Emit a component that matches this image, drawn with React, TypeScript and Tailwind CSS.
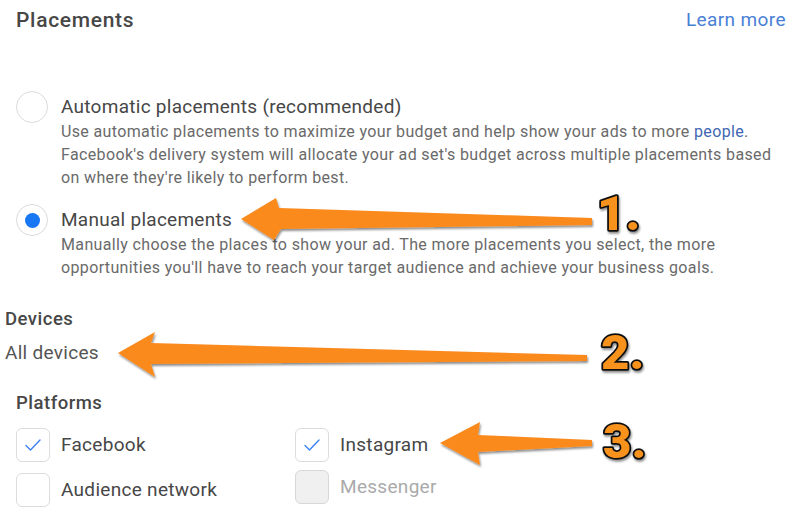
import React from "react";

const font = { fontFamily: "Roboto, 'Noto Sans', Arial, sans-serif" };

interface RadioProps {
  checked: boolean
  label: string
  children: React.ReactNode
}
const RadioOption: React.FC<RadioProps> = ({ checked, label, children }) => {
  return (
    <div className="flex items-start">
      <div className="w-8 h-8 shrink-0 rounded-full border border-[#dcdcdc] bg-white flex items-center justify-center">
        {checked && <div className="w-[15px] h-[15px] rounded-full bg-[#1877f2]" />}
      </div>
      <div className="ml-[13px] mt-[3px]">
        <div className="text-[19px] leading-[26px] tracking-[0.27px] text-[#474747]">{label}</div>
        <div className="text-[16px] leading-[23px] tracking-[0.36px] text-[#6a6a6a]">{children}</div>
      </div>
    </div>
  )
}

interface CheckProps {
  checked?: boolean
  disabled?: boolean
  label: string
}
const CheckOption: React.FC<CheckProps> = ({ checked, disabled, label }) => {
  return (
    <div className="flex items-center">
      <div
        className={
          disabled
            ? "w-[34px] h-[34px] rounded-md border border-[#d8d8d8] bg-[#f0f0f0] flex items-center justify-center"
            : "w-[34px] h-[34px] rounded-md border border-[#dcdcdc] bg-white flex items-center justify-center"
        }
      >
        {checked && (
          <svg width="18" height="14" viewBox="0 0 18 14" fill="none">
            <path d="M2 7.5 L6.5 12 L16 2" stroke="#3b82f6" strokeWidth="1.4" strokeLinecap="round" strokeLinejoin="round" />
          </svg>
        )}
      </div>
      <div
        className={
          disabled
            ? "ml-[11px] text-[19px] tracking-[0.3px] text-[#aaa]"
            : "ml-[11px] text-[19px] tracking-[0.3px] text-[#474747]"
        }
      >
        {label}
      </div>
    </div>
  )
}

const Arrows = () => {
  return (
    <svg className="absolute left-0 top-0 pointer-events-none" width="800" height="518" viewBox="0 0 800 518">
      <defs>
        <filter id="sh" x="-10%" y="-30%" width="120%" height="160%">
          <feDropShadow dx="1" dy="2" stdDeviation="1.2" floodColor="#000" floodOpacity="0.45" />
        </filter>
      </defs>
      <g fill="#fb8a1e" filter="url(#sh)">
        <polygon points="241,219 276,198 279,208 592,218 592,225 281,229 274,240" />
        <polygon points="118,353 155,332 151,343 587,355 587,361 151,364 155,377" />
        <polygon points="440,443 480,422 478,435 592,440 592,446 478,452 480,465" />
      </g>
      <g
        fill="#f7931e"
        stroke="#111"
        strokeWidth="3.5"
        strokeLinejoin="round"
        fontSize="49"
        fontWeight="900"
        style={{ ...font, paintOrder: "stroke" }}
        filter="url(#sh)"
      >
        <text x="597" y="230">1.</text>
        <text x="601" y="369">2.</text>
        <text x="603" y="458">3.</text>
      </g>
    </svg>
  )
}

export default function App() {
  return (
    <div className="relative w-[800px] h-[518px] bg-white overflow-hidden" style={font}>
      <div className="flex justify-between items-center pl-4 pr-[14px] pt-2 h-8">
        <div className="text-[21px] leading-6 font-medium tracking-[0.7px] text-[#474747]">Placements</div>
        <div className="text-[19px] leading-6 tracking-[0.4px] text-[#4a7fd6]">Learn more</div>
      </div>

      <div className="pl-4 mt-[59px]">
        <RadioOption checked={false} label="Automatic placements (recommended)">
          Use automatic placements to maximize your budget and help show your ads to more{" "}
          <span className="text-[#4267b2]">people</span>.
          <br />
          Facebook's delivery system will allocate your ad set's budget across multiple placements based
          <br />
          on where they're likely to perform best.
        </RadioOption>
        <div className="mt-[15px]">
          <RadioOption checked={true} label="Manual placements">
            Manually choose the places to show your ad. The more placements you select, the more
            <br />
            opportunities you'll have to reach your target audience and achieve your business goals.
          </RadioOption>
        </div>
      </div>

      <div className="pl-[5px] mt-[28px]">
        <div className="text-[18.5px] leading-6 font-medium tracking-[0.5px] text-[#474747]">Devices</div>
        <div className="text-[19px] leading-6 tracking-[0.3px] text-[#555] mt-[10px]">All devices</div>
      </div>

      <div className="pl-4 mt-[26px]">
        <div className="text-[18.5px] leading-6 font-medium tracking-[0.5px] text-[#474747]">Platforms</div>
        <div className="flex mt-[13px]">
          <div className="w-[279px] flex flex-col gap-[11px]">
            <CheckOption checked label="Facebook" />
            <CheckOption label="Audience network" />
          </div>
          <div className="flex flex-col gap-2">
            <CheckOption checked label="Instagram" />
            <CheckOption disabled label="Messenger" />
          </div>
        </div>
      </div>

      <Arrows />
    </div>
  )
}
